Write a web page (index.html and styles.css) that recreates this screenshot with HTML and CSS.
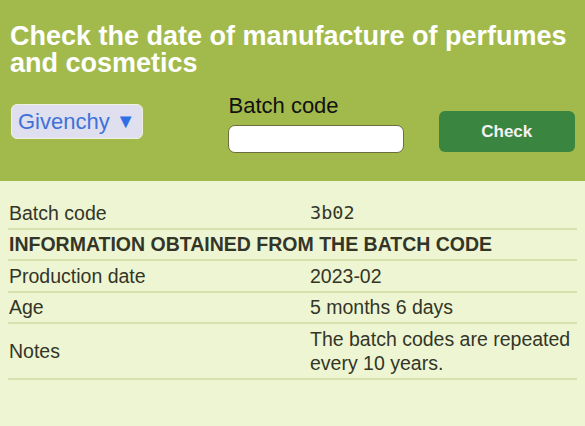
FILE: index.html
```html
<!DOCTYPE html>
<html>
<head>
<meta charset="utf-8">
<link rel="stylesheet" href="styles.css">
</head>
<body>
<header class="hero">
  <h1 class="title">Check the date of manufacture of perfumes and cosmetics</h1>
  <form class="form">
    <div class="brand">Givenchy <span class="caret">&#9660;</span></div>
    <div class="field">
      <label class="label">Batch code</label>
      <div class="input"></div>
    </div>
    <button type="button" class="btn">Check</button>
  </form>
</header>
<main class="result">
  <table class="table">
    <tr><td class="k">Batch code</td><td class="v mono">3b02</td></tr>
    <tr><td class="head" colspan="2">INFORMATION OBTAINED FROM THE BATCH CODE</td></tr>
    <tr><td class="k">Production date</td><td class="v">2023-02</td></tr>
    <tr><td class="k">Age</td><td class="v">5 months 6 days</td></tr>
    <tr><td class="k">Notes</td><td class="v">The batch codes are repeated every 10 years.</td></tr>
  </table>
</main>
</body>
</html>
```

FILE: styles.css
```css
html, body { margin: 0; padding: 0; }
body {
  font-family: "Liberation Sans", Arial, sans-serif;
  background: #eef5d2;
  width: 585px;
  height: 426px;
  overflow: hidden;
}
.hero {
  background: #a2ba4c;
  height: 181px;
  box-sizing: border-box;
  padding: 23px 10px 0 10px;
}
.title {
  margin: 0;
  color: #fff;
  font-size: 27px;
  line-height: 27px;
  font-weight: bold;
}
.form {
  display: flex;
  align-items: flex-start;
  margin-top: 17px;
}
.brand {
  margin-top: 10px;
  margin-left: 1px;
  height: 35px;
  box-sizing: border-box;
  padding: 0 6px;
  width: 132px;
  display: flex;
  align-items: center;
  background: #dfdff0;
  border: 1.5px solid #f0f0e0;
  border-radius: 6px;
  color: #3e72d8;
  font-size: 22px;
  white-space: nowrap;
}
.caret { font-size: 20px; margin-left: 6px; color: #2f6fe6; }
.field {
  margin-left: 85px;
  display: flex;
  flex-direction: column;
}
.label {
  font-size: 22px;
  color: #111;
  line-height: 24px;
  margin-left: 1px;
}
.input {
  margin-top: 7px;
  width: 176px;
  height: 28px;
  box-sizing: border-box;
  background: #fff;
  border: 1.5px solid #6d6d3e;
  border-radius: 7px;
}
.btn {
  margin-left: 35px;
  margin-top: 17px;
  width: 139px;
  height: 41px;
  background: #3a8540;
  border: none;
  border-radius: 6px;
  color: #f2f2f2;
  font-family: "Liberation Sans", Arial, sans-serif;
  font-weight: bold;
  font-size: 17px;
}
.result {
  padding: 17px 8px 0 8px;
}
.table {
  width: 569px;
  border-collapse: collapse;
  color: #333528;
  font-size: 19.5px;
}
.table td {
  border-bottom: 2px solid #d7e1ae;
  padding: 2.5px 1px 3px 1px;
  line-height: 24px;
  vertical-align: middle;
}
.k { width: 299px; }
.mono { font-family: "DejaVu Sans Mono", monospace; font-size: 18.5px; }
.head { font-weight: bold; }
```
